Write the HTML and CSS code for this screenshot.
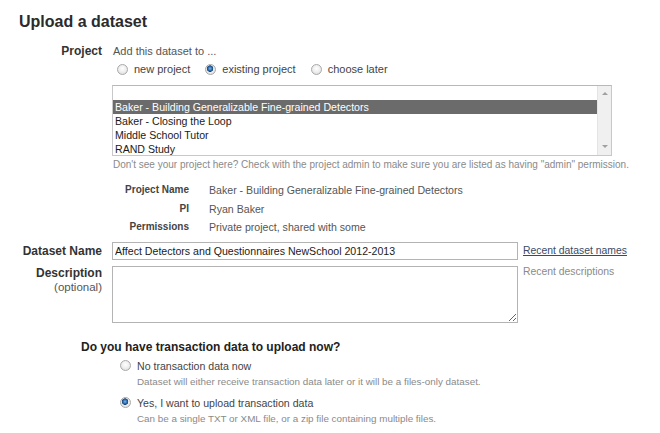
FILE: index.html
```html
<!DOCTYPE html>
<html>
<head>
<meta charset="utf-8">
<link rel="stylesheet" href="styles.css">
</head>
<body>
<div class="page">
  <h1 class="title">Upload a dataset</h1>

  <div class="row row-project">
    <div class="label">Project</div>
    <div class="content">
      <div class="intro">Add this dataset to ...</div>
      <div class="radios">
        <label class="opt"><input type="radio" name="proj" class="radio"><span>new project</span></label>
        <label class="opt"><input type="radio" name="proj" class="radio" checked><span>existing project</span></label>
        <label class="opt"><input type="radio" name="proj" class="radio"><span>choose later</span></label>
      </div>
      <div class="listbox">
        <div class="items">
          <div class="item"></div>
          <div class="item selected">Baker - Building Generalizable Fine-grained Detectors</div>
          <div class="item">Baker - Closing the Loop</div>
          <div class="item">Middle School Tutor</div>
          <div class="item">RAND Study</div>
        </div>
        <div class="scrollbar">
          <span class="arrow up"></span>
          <span class="arrow down"></span>
        </div>
      </div>
      <div class="hint">Don't see your project here? Check with the project admin to make sure you are listed as having "admin" permission.</div>
      <div class="details">
        <div class="dlabel">Project Name</div><div class="dvalue">Baker - Building Generalizable Fine-grained Detectors</div>
        <div class="dlabel">PI</div><div class="dvalue">Ryan Baker</div>
        <div class="dlabel">Permissions</div><div class="dvalue">Private project, shared with some</div>
      </div>
    </div>
  </div>

  <div class="row row-name">
    <div class="label">Dataset Name</div>
    <div class="content inline">
      <input class="text-input" type="text" value="Affect Detectors and Questionnaires NewSchool 2012-2013">
      <a class="recent-link" href="#">Recent dataset names</a>
    </div>
  </div>

  <div class="row row-desc">
    <div class="label">Description<br><span class="optional">(optional)</span></div>
    <div class="content inline">
      <textarea class="textarea"></textarea>
      <span class="recent-muted">Recent descriptions</span>
    </div>
  </div>

  <div class="question">Do you have transaction data to upload now?</div>
  <div class="choices">
    <div class="choice">
      <label class="opt"><input type="radio" name="tx" class="radio"><span>No transaction data now</span></label>
      <div class="sub">Dataset will either receive transaction data later or it will be a files-only dataset.</div>
    </div>
    <div class="choice">
      <label class="opt"><input type="radio" name="tx" class="radio" checked><span>Yes, I want to upload transaction data</span></label>
      <div class="sub">Can be a single TXT or XML file, or a zip file containing multiple files.</div>
    </div>
  </div>
</div>
</body>
</html>
```

FILE: styles.css
```css
html, body {
  margin: 0;
  padding: 0;
  background: #ffffff;
}

body {
  font-family: "Liberation Sans", Arial, sans-serif;
  color: #333333;
  font-size: 11px;
}

.page {
  padding-top: 12px;
}

.title {
  margin: 0 0 0 19px;
  font-size: 16px;
  line-height: 20px;
  font-weight: bold;
  color: #2b2b2b;
}

.row {
  display: grid;
  grid-template-columns: 102px 1fr;
  column-gap: 10px;
}

.label {
  text-align: right;
  font-weight: bold;
  font-size: 12px;
  line-height: 14px;
  color: #333333;
}

.row-project {
  margin-top: 12px;
}

.intro {
  padding-left: 1px;
  line-height: 14px;
  color: #555555;
}

.radios {
  display: flex;
  margin-top: 4px;
  padding-left: 5px;
  height: 14px;
  align-items: center;
}

.opt {
  display: inline-flex;
  align-items: center;
  line-height: 14px;
  color: #444444;
}

.radios .opt {
  margin-right: 15px;
}

.radios .opt span {
  margin-left: 6px;
}

.radio {
  -webkit-appearance: none;
  appearance: none;
  margin: 0;
  width: 11px;
  height: 11px;
  border-radius: 50%;
  border: 1px solid #a9a9a9;
  background: radial-gradient(circle at 50% 40%, #ffffff 0%, #eeeeee 50%, #d4d4d4 100%);
  box-sizing: border-box;
  flex: none;
}

.radio:checked {
  background:
    radial-gradient(circle at 45% 40%, #7fb4e8 0px, #2a6bb0 2px, #1a4478 3px, rgba(0,0,0,0) 3.5px),
    radial-gradient(circle at 50% 40%, #ffffff 0%, #eeeeee 50%, #d4d4d4 100%);
}

.listbox {
  margin-top: 9px;
  width: 500px;
  height: 71px;
  box-sizing: border-box;
  border: 1px solid #c8c8c8;
  border-top-color: #b8b8b8;
  display: flex;
  background: #ffffff;
}

.items {
  flex: 1;
}

.item {
  height: 14px;
  line-height: 14px;
  padding-left: 2px;
  font-size: 10.6px;
  color: #1a1a1a;
  white-space: nowrap;
}

.item.selected {
  background: #6b6b6b;
  color: #ffffff;
}

.scrollbar {
  width: 13px;
  background: #f0f0f0;
  border-left: 1px solid #e4e4e4;
  position: relative;
}

.arrow {
  position: absolute;
  left: 4px;
  width: 0;
  height: 0;
  border-left: 3px solid transparent;
  border-right: 3px solid transparent;
}

.arrow.up {
  top: 6px;
  border-bottom: 3px solid #a0a0a0;
}

.arrow.down {
  bottom: 7px;
  border-top: 3px solid #a0a0a0;
}

.hint {
  margin-top: 2px;
  padding-left: 1px;
  line-height: 14px;
  font-size: 10px;
  color: #8a8a8a;
  white-space: nowrap;
}

.details {
  display: grid;
  grid-template-columns: 77px 1fr;
  column-gap: 20px;
  margin-top: 9px;
}

.dlabel {
  text-align: right;
  font-weight: bold;
  font-size: 10px;
  line-height: 18.5px;
  color: #444444;
}

.dvalue {
  font-size: 10.6px;
  line-height: 18.5px;
  color: #555555;
}

.row-name {
  margin-top: 5px;
  align-items: center;
}

.inline {
  display: flex;
  align-items: flex-start;
  gap: 5px;
}

.row-name .inline {
  align-items: center;
}

.text-input {
  width: 406px;
  height: 18px;
  box-sizing: border-box;
  margin: 0;
  border: 1px solid #b4b4b4;
  padding: 0 2px;
  font-family: "Liberation Sans", Arial, sans-serif;
  font-size: 10.6px;
  color: #1a1a1a;
  outline: none;
}

.recent-link {
  font-size: 10.4px;
  color: #3a4a66;
  text-decoration: underline;
}

.row-desc {
  margin-top: 6px;
}

.optional {
  font-weight: normal;
  font-size: 11.5px;
  color: #555555;
}

.textarea {
  display: block;
  width: 406px;
  height: 57px;
  box-sizing: border-box;
  margin: 0;
  border: 1px solid #b4b4b4;
  font-family: "Liberation Sans", Arial, sans-serif;
  font-size: 10.6px;
  outline: none;
  resize: both;
}

.recent-muted {
  font-size: 10.4px;
  line-height: 12px;
  color: #8a8a8a;
}

.question {
  margin-top: 17px;
  margin-left: 81px;
  font-weight: bold;
  font-size: 12px;
  line-height: 14px;
  color: #222222;
}

.choices {
  padding-left: 120px;
  padding-top: 4px;
}

.choice + .choice {
  margin-top: 5px;
}

.choice .opt {
  line-height: 16px;
  font-size: 10.6px;
}

.choice .opt span {
  margin-left: 6px;
}

.sub {
  padding-left: 17px;
  line-height: 16px;
  font-size: 9.85px;
  color: #8a8a8a;
  white-space: nowrap;
}
```
